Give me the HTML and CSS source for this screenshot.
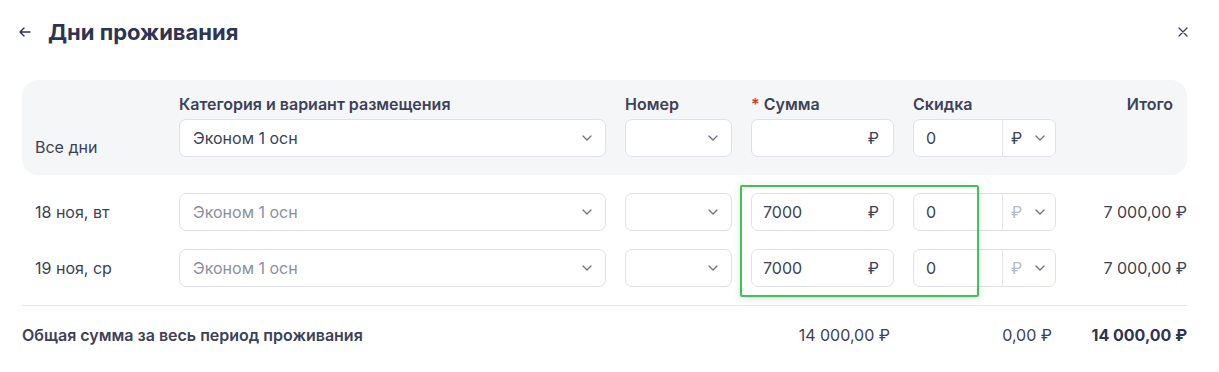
FILE: index.html
```html
<!DOCTYPE html>
<html lang="ru">
<head>
    <meta charset="UTF-8">
    <meta name="viewport" content="width=device-width, initial-scale=1.0">
    <title>Дни проживания</title>
    <link rel="stylesheet" href="styles.css">
</head>
<body>
<div class="modal">
    <div class="head">
        <button class="icon-btn back" type="button">
            <svg width="12" height="10" viewBox="0 0 12 10"><path d="M5 1L1 5l4 4M1 5h10" fill="none" stroke="#2e3551" stroke-width="1.4" stroke-linecap="round" stroke-linejoin="round"/></svg>
        </button>
        <h1>Дни проживания</h1>
        <button class="icon-btn close" type="button">
            <svg width="10" height="10" viewBox="0 0 10 10"><path d="M1 1l8 8M9 1L1 9" fill="none" stroke="#3b4157" stroke-width="1.3" stroke-linecap="round"/></svg>
        </button>
    </div>

    <div class="panel grid">
        <div class="cap c2">Категория и вариант размещения</div>
        <div class="cap c3">Номер</div>
        <div class="cap c4"><span class="req">*</span> Сумма</div>
        <div class="cap c5">Скидка</div>
        <div class="cap c6 right">Итого</div>

        <div class="day all">Все дни</div>
        <div class="select"><span>Эконом 1 осн</span><svg class="chev" width="10" height="6" viewBox="0 0 10 6"><path d="M1 1l4 4 4-4" fill="none" stroke="#6b7186" stroke-width="1.3" stroke-linecap="round" stroke-linejoin="round"/></svg></div>
        <div class="select"><span></span><svg class="chev" width="10" height="6" viewBox="0 0 10 6"><path d="M1 1l4 4 4-4" fill="none" stroke="#6b7186" stroke-width="1.3" stroke-linecap="round" stroke-linejoin="round"/></svg></div>
        <div class="input"><span></span><span class="rub">₽</span></div>
        <div class="combo">
            <div class="combo-val">0</div>
            <div class="combo-unit"><span class="rub">₽</span><svg class="chev" width="10" height="6" viewBox="0 0 10 6"><path d="M1 1l4 4 4-4" fill="none" stroke="#6b7186" stroke-width="1.3" stroke-linecap="round" stroke-linejoin="round"/></svg></div>
        </div>
    </div>

    <div class="days">
        <div class="row grid">
            <div class="day">18 ноя, вт</div>
            <div class="select muted"><span>Эконом 1 осн</span><svg class="chev" width="10" height="6" viewBox="0 0 10 6"><path d="M1 1l4 4 4-4" fill="none" stroke="#6b7186" stroke-width="1.3" stroke-linecap="round" stroke-linejoin="round"/></svg></div>
            <div class="select"><span></span><svg class="chev" width="10" height="6" viewBox="0 0 10 6"><path d="M1 1l4 4 4-4" fill="none" stroke="#6b7186" stroke-width="1.3" stroke-linecap="round" stroke-linejoin="round"/></svg></div>
            <div class="input"><span>7000</span><span class="rub">₽</span></div>
            <div class="combo">
                <div class="combo-val">0</div>
                <div class="combo-unit off"><span class="rub">₽</span><svg class="chev" width="10" height="6" viewBox="0 0 10 6"><path d="M1 1l4 4 4-4" fill="none" stroke="#6b7186" stroke-width="1.3" stroke-linecap="round" stroke-linejoin="round"/></svg></div>
            </div>
            <div class="total">7 000,00 ₽</div>
        </div>
        <div class="row grid">
            <div class="day">19 ноя, ср</div>
            <div class="select muted"><span>Эконом 1 осн</span><svg class="chev" width="10" height="6" viewBox="0 0 10 6"><path d="M1 1l4 4 4-4" fill="none" stroke="#6b7186" stroke-width="1.3" stroke-linecap="round" stroke-linejoin="round"/></svg></div>
            <div class="select"><span></span><svg class="chev" width="10" height="6" viewBox="0 0 10 6"><path d="M1 1l4 4 4-4" fill="none" stroke="#6b7186" stroke-width="1.3" stroke-linecap="round" stroke-linejoin="round"/></svg></div>
            <div class="input"><span>7000</span><span class="rub">₽</span></div>
            <div class="combo">
                <div class="combo-val">0</div>
                <div class="combo-unit off"><span class="rub">₽</span><svg class="chev" width="10" height="6" viewBox="0 0 10 6"><path d="M1 1l4 4 4-4" fill="none" stroke="#6b7186" stroke-width="1.3" stroke-linecap="round" stroke-linejoin="round"/></svg></div>
            </div>
            <div class="total">7 000,00 ₽</div>
        </div>
    </div>

    <div class="summary grid">
        <div class="sum-label">Общая сумма за весь период проживания</div>
        <div class="sum-val c4">14 000,00 ₽</div>
        <div class="sum-val c5">0,00 ₽</div>
        <div class="sum-val c6 strong">14 000,00 ₽</div>
    </div>

    <!-- highlight -->
    <div class="mark"></div>
</div>
</body>
</html>
```

FILE: styles.css
```css
html, body {
    margin: 0;
    background: #ffffff;
    overflow: hidden;
}
body {
    font-family: Inter, "Noto Sans", sans-serif;
    font-size: 16px;
    color: #3b4157;
}
.modal {
    position: relative;
    padding: 18px 32px 0 22px;
}
.head {
    display: flex;
    align-items: center;
    height: 28px;
}
.head h1 {
    margin: 0 0 0 17px;
    font-size: 22px;
    line-height: 28px;
    font-weight: 700;
    color: #2e3551;
    flex: 1;
}
.icon-btn {
    border: 0;
    background: none;
    padding: 0;
    display: flex;
    cursor: pointer;
}
.back {
    margin-left: -3px;
}
.close {
    margin-right: -1px;
}

.grid {
    display: grid;
    grid-template-columns: 125px 427px 107px 143px 143px 1fr;
    column-gap: 19px;
}
.panel {
    margin-top: 34px;
    background: #f5f6f8;
    border-radius: 16px;
    padding: 14px 14px 18px 13px;
    row-gap: 5px;
}
.cap {
    font-weight: 600;
    line-height: 20px;
    color: #3d4257;
    white-space: nowrap;
}
.c2 { grid-column: 2; }
.c3 { grid-column: 3; }
.c4 { grid-column: 4; }
.c5 { grid-column: 5; }
.c6 { grid-column: 6; }
.right { text-align: right; }
.req { color: #d9362b; }

.day {
    grid-column: 1;
    align-self: center;
    line-height: 20px;
    white-space: nowrap;
}
.day.all {
    align-self: end;
    margin-bottom: 0;
}

.select, .input, .combo {
    height: 38px;
    box-sizing: border-box;
    background: #fff;
    border: 1px solid #dfe1e6;
    border-radius: 7px;
    display: flex;
    align-items: center;
}
.select {
    justify-content: space-between;
    padding: 0 13px 0 13px;
}
.select.muted span {
    color: #8b909d;
}
.input {
    justify-content: space-between;
    padding: 0 14px 0 11px;
}
.rub {
    color: #3b4157;
}
.combo-val {
    width: 89px;
    height: 100%;
    box-sizing: border-box;
    padding-left: 12px;
    display: flex;
    align-items: center;
    border-right: 1px solid #e3e5e9;
}
.combo-unit {
    flex: 1;
    display: flex;
    align-items: center;
    gap: 13px;
    padding-left: 8px;
}
.combo-unit.off .rub {
    color: #b7bbc5;
}

.days {
    margin-top: 18px;
    display: flex;
    flex-direction: column;
    gap: 18px;
}
.row {
    padding-left: 13px;
}
.total {
    grid-column: 6;
    align-self: center;
    text-align: right;
    white-space: nowrap;
}

.summary {
    margin-top: 18px;
    border-top: 1px solid #e4e5ea;
    padding: 19px 0 0 13px;
    line-height: 20px;
}
.sum-label {
    grid-column: 1 / 4;
    margin-left: -13px;
    font-weight: 600;
    color: #3d4257;
    white-space: nowrap;
}
.sum-val {
    text-align: right;
    padding-right: 4px;
    white-space: nowrap;
}
.sum-val.c6 {
    padding-right: 0;
}
.strong {
    font-weight: 700;
    color: #2e3551;
}

.mark {
    position: absolute;
    left: 740px;
    top: 185px;
    width: 239px;
    height: 112px;
    box-sizing: border-box;
    border: 2px solid #3cc651;
    border-radius: 2px;
    box-shadow: 0 2px 8px rgba(40, 50, 80, 0.12);
    pointer-events: none;
}
```
